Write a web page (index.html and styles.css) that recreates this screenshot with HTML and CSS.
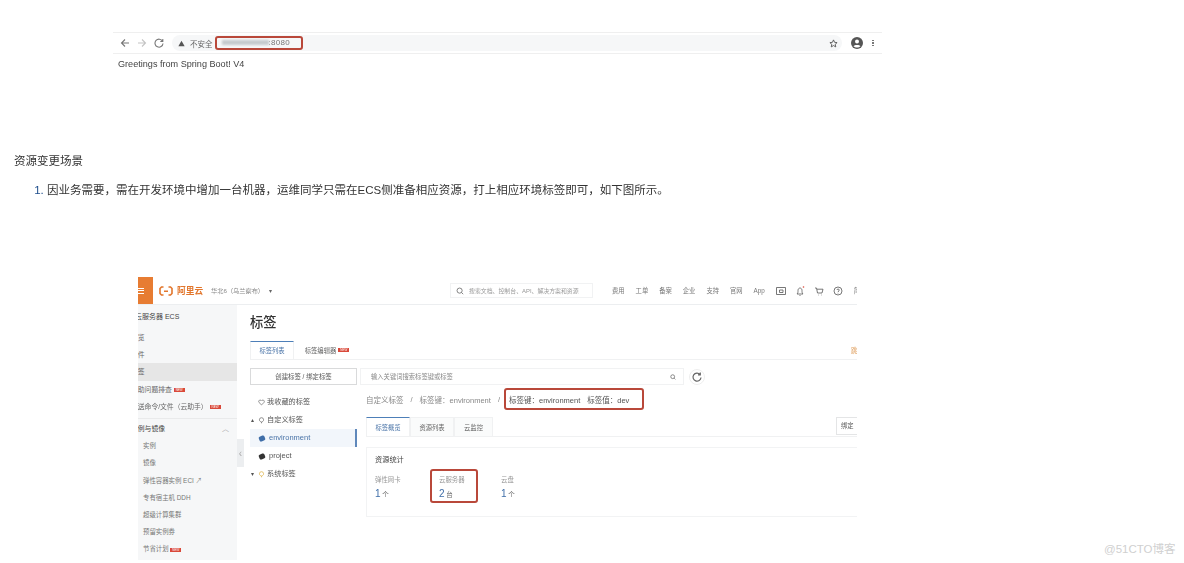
FILE: index.html
```html
<!DOCTYPE html>
<html lang="zh">
<head>
<meta charset="utf-8">
<title>资源变更场景</title>
<link rel="stylesheet" href="styles.css">
</head>
<body>
<main class="article">
  <figure class="shot-browser">
    <div class="toolbar">
      <svg class="tb-ico" viewBox="0 0 10 10"><path d="M9 5H1.5M5 1.5 1.5 5 5 8.500"/></svg>
      <svg class="tb-ico light" viewBox="0 0 10 10"><path d="M1 5h7.500M5 1.500 8.500 5 5 8.500"/></svg>
      <svg class="tb-ico" viewBox="0 0 10 10"><path d="M8.500 3.200A4 4 0 1 0 9 5.500M8.800 1v2.500H6.300"/></svg>
      <div class="omnibox">
        <svg class="warn" viewBox="0 0 10 10"><path d="M5 1 9.500 9H.5z"/></svg>
        <span class="insecure">不安全</span>
        <span class="url"><span class="url-blur"></span>:8080</span>
        <svg class="star" viewBox="0 0 10 10"><path d="m5 1 1.200 2.700 2.800.3-2.100 1.900.6 2.900L5 7.300 2.500 8.800l.6-2.900L1 4l2.800-.3z"/></svg>
      </div>
      <svg class="avatar" viewBox="0 0 12 12"><circle cx="6" cy="6" r="6"/><circle class="cut" cx="6" cy="4.500" r="2"/><path class="cut" d="M2.500 9.300C3.500 7.700 8.500 7.700 9.500 9.300 7.800 11 4.200 11 2.500 9.300z"/></svg>
      <span class="dots"><i></i><i></i><i></i></span>
    </div>
    <p class="greeting">Greetings from Spring Boot! V4</p>
  </figure>

  <h2 class="section-title">资源变更场景</h2>
  <ol class="steps">
    <li>因业务需要，需在开发环境中增加一台机器，运维同学只需在ECS侧准备相应资源，打上相应环境标签即可，如下图所示。</li>
  </ol>

  <figure class="shot-console">
    <div class="console">
      <header class="topbar">
        <span class="burger"><i></i><i></i><i></i></span>
        <span class="logo">
          <svg class="logo-mark" viewBox="0 0 14 10"><path d="M4.500 1H2.500L1 2.500v5L2.500 9h2M9.500 1h2L13 2.500v5L11.500 9h-2M5 5.200h4"/></svg>
          <b>阿里云</b>
        </span>
        <span class="region">华北6（乌兰察布）<i class="region-arrow">▾</i></span>
        <span class="searchbox">
          <svg class="search-ico" viewBox="0 0 10 10"><circle cx="4.500" cy="4.500" r="3.200"/><path d="m7 7 2 2"/></svg>
          搜索文档、控制台、API、解决方案和资源
        </span>
        <nav class="topnav">
          <span>费用</span><span>工单</span><span>备案</span><span>企业</span><span>支持</span><span>官网</span><span>App</span>
          <svg viewBox="0 0 10 10"><path d="M.5 1.500h9v7h-9zM3.500 6.500h3.500V4H3.500z"/></svg>
          <svg class="bell" viewBox="0 0 10 10"><path d="M2 8c1-1 1-2 1-3.500C3 3 4 2 5 2s2 1 2 2.500S7 7 8 8zM4.500 9.500h1"/><circle class="dot" cx="8.500" cy="1" r=".8"/></svg>
          <svg viewBox="0 0 10 10"><path d="M1 2h1.500l1 5H8l1-3.800H3M4 9h.5M7.500 9H8"/></svg>
          <svg viewBox="0 0 10 10"><circle cx="5" cy="5" r="4"/><path d="M3.800 4C4 2.800 6.300 2.800 6.300 4 6.300 5 5 5 5 6.200M5 7.200v.4"/></svg>
          <span>简</span>
        </nav>
      </header>
      <div class="workspace">
        <aside class="sidebar">
          <h3 class="side-title">云服务器 ECS</h3>
          <ul class="side-list">
            <li>概览</li>
            <li>事件</li>
            <li class="active">标签</li>
            <li>自助问题排查 <em class="new">NEW</em></li>
            <li class="rule">发送命令/文件（云助手） <em class="new">NEW</em></li>
            <li class="group">实例与镜像<span class="caret">︿</span></li>
            <li class="sub">实例</li>
            <li class="sub">镜像</li>
            <li class="sub">弹性容器实例 ECI ↗</li>
            <li class="sub">专有宿主机 DDH</li>
            <li class="sub">超级计算集群</li>
            <li class="sub">预留实例券</li>
            <li class="sub">节省计划 <em class="new">NEW</em></li>
          </ul>
          <span class="collapse">‹</span>
        </aside>
        <section class="content">
          <h1 class="page-title">标签</h1>
          <div class="tabs tabs-main">
            <span class="tab on">标签列表</span>
            <span class="tab plain">标签编辑器 <em class="new">NEW</em></span>
            <span class="tab-right">跳</span>
          </div>
          <div class="split">
            <div class="tree">
              <button class="create">创建标签 / 绑定标签</button>
              <ul class="tree-list">
                <li class="node fav"><svg class="node-ico" viewBox="0 0 10 10"><path d="M5 8.500 1.500 5C.2 3.300 1.500 1.500 3 1.500c1 0 1.600.6 2 1.200.4-.6 1-1.200 2-1.200 1.500 0 2.800 1.800 1.500 3.500z"/></svg>我收藏的标签</li>
                <li class="node"><span class="tw">▴</span><svg class="node-ico" viewBox="0 0 10 10"><path d="M5 1a3 3 0 0 1 3 3c0 1.700-1.300 2.700-3 3.200V9M5 1a3 3 0 0 0-3 3c0 1.500 1 2.500 3 3.200"/></svg>自定义标签</li>
                <li class="sel"><span class="tagdot"></span>environment</li>
                <li class="leaf"><span class="tagdot dark"></span>project</li>
                <li class="node"><span class="tw">▾</span><svg class="node-ico yellow" viewBox="0 0 10 10"><path d="M5 1a3 3 0 0 1 3 3c0 1.700-1.300 2.700-3 3.200V9M5 1a3 3 0 0 0-3 3c0 1.500 1 2.500 3 3.200"/></svg>系统标签</li>
              </ul>
            </div>
            <div class="detail">
              <div class="filter">
                <span class="filter-input">输入关键词搜索标签键或标签<svg class="search-ico small" viewBox="0 0 10 10"><circle cx="4.500" cy="4.500" r="3.200"/><path d="m7 7 2 2"/></svg></span>
                <svg class="refresh" viewBox="0 0 16 16"><circle class="ring" cx="8" cy="8" r="7.500"/><path d="M11 5.500A4 4 0 1 0 12 8.500M11.300 3.500v2.300H9"/></svg>
              </div>
              <div class="crumbs">
                <span>自定义标签</span><span>/</span><span>标签键：environment</span><span>/</span>
                <span class="mark crumb-mark"><span>标签键：environment</span><span>标签值：dev</span></span>
              </div>
              <div class="tabs tabs-sub">
                <span class="tab on">标签概览</span>
                <span class="tab">资源列表</span>
                <span class="tab narrow">云监控</span>
                <span class="bind">绑定</span>
              </div>
              <div class="card">
                <h4 class="card-title">资源统计</h4>
                <div class="stats">
                  <div class="stat"><span class="stat-label">弹性网卡</span><span class="stat-val"><b>1</b> 个</span></div>
                  <div class="stat mark"><span class="stat-label">云服务器</span><span class="stat-val"><b>2</b> 台</span></div>
                  <div class="stat"><span class="stat-label">云盘</span><span class="stat-val"><b>1</b> 个</span></div>
                </div>
              </div>
            </div>
          </div>
        </section>
      </div>
    </div>
  </figure>
</main>
<span class="watermark">@51CTO博客</span>
</body>
</html>
```

FILE: styles.css
```css
* { box-sizing: border-box; }
html, body { margin: 0; height: 563px; overflow: hidden; background: #fff; }
body { position: relative; font-family: "Liberation Sans", "Noto Sans CJK SC", sans-serif; color: #222; }
figure, h1, h2, h3, h4, p, ul, ol { margin: 0; padding: 0; }
ul { list-style: none; }
em, i { font-style: normal; }

.article { display: flex; flex-direction: column; padding-top: 32px; }

/* first screenshot */
.shot-browser { margin-left: 113px; width: 769px; filter: blur(.5px); }
.toolbar { height: 22px; display: flex; align-items: center; gap: 7px; padding: 0 6px 0 7px; border-top: 1px solid #efefef; border-bottom: 1px solid #efefef; }
.tb-ico { width: 10px; height: 10px; flex: none; fill: none; stroke: #777; stroke-width: 1.1; }
.tb-ico.light { stroke: #c4c4c4; }
.omnibox { flex: 1; height: 16px; margin-left: 1px; display: flex; align-items: center; gap: 3px; padding: 0 4px 0 6px; background: #f6f7f8; border-radius: 8px; font-size: 7.500px; color: #666; }
.warn { width: 7px; height: 7px; fill: #555; flex: none; }
.insecure { margin-left: 2px; }
.url { height: 14px; width: 88px; margin: -1px 0 0 -1px; display: flex; align-items: center; padding-left: 5px; border: 2px solid #b9483a; border-radius: 3px; font-size: 8px; letter-spacing: .3px; color: #777; }
.url-blur { width: 47px; height: 5px; background: #c5cacd; filter: blur(1px); }
.star { width: 9px; height: 9px; margin-left: auto; fill: none; stroke: #555; }
.avatar { width: 12px; height: 12px; margin-left: 2px; fill: #555; flex: none; }
.avatar .cut { fill: #fff; }
.dots { display: flex; flex-direction: column; gap: 1px; width: 6px; align-items: center; }
.dots i { width: 1.500px; height: 1.500px; background: #777; }
.greeting { margin: 4px 0 0 5px; font-size: 9.100px; line-height: 12px; color: #444; }

/* article text */
.section-title { margin: 83px 0 0 14px; font-size: 11.500px; line-height: 16px; font-weight: 400; color: #333; filter: blur(.2px); }
.steps { margin: 13px 0 0 47px; font-size: 11.500px; line-height: 16px; color: #333; filter: blur(.2px); }
.steps li::marker { color: #1e4e8c; }

/* second screenshot */
.shot-console { margin: 79px 0 0 138px; width: 719px; height: 283px; overflow: hidden; filter: blur(.55px); }
.console { width: 740px; margin-left: -15px; color: #555; }
.topbar { height: 28px; display: flex; align-items: center; border-bottom: 1px solid #eceef0; font-size: 6.300px; }
.burger { width: 30px; height: 27px; padding-left: 15px; display: flex; flex-direction: column; justify-content: center; gap: 1.500px; background: #e77c32; }
.burger i { width: 6px; height: 1px; background: #fff; }
.logo { margin-left: 6px; display: flex; align-items: center; gap: 4px; color: #e2762c; font-size: 8.700px; line-height: 12px; }
.logo-mark { width: 14px; height: 10px; fill: none; stroke: #e2762c; stroke-width: 1.600; }
.region { margin-left: 8px; color: #888; font-size: 6.200px; white-space: nowrap; }
.region-arrow { margin-left: 5px; color: #666; }
.searchbox { margin-left: 178px; width: 143px; height: 15px; display: flex; align-items: center; gap: 5px; padding-left: 5px; border: 1px solid #f1f2f3; color: #999; font-size: 5.900px; white-space: nowrap; overflow: hidden; }
.search-ico { width: 8px; height: 8px; flex: none; fill: none; stroke: #666; stroke-width: 1; }
.topnav { margin-left: 19px; display: flex; align-items: center; gap: 11px; color: #777; white-space: nowrap; }
.topnav svg { width: 10px; height: 10px; fill: none; stroke: #555; stroke-width: .8; }
.topnav svg + svg { margin-left: -2px; }
.topnav .dot { fill: #d9493a; stroke: none; }
.workspace { display: flex; height: 256px; }
.sidebar { position: relative; width: 114px; flex: none; background: #f6f7f8; padding-top: 4px; font-size: 6.800px; }
.side-title { padding-left: 12px; height: 20px; line-height: 16px; font-size: 7px; font-weight: 400; color: #444; }
.side-list li { height: 17.200px; line-height: 17.200px; padding-left: 8px; color: #666; white-space: nowrap; }
.side-list .active { background: #e6e6e6; }
.side-list .rule { position: relative; margin-bottom: 5px; }
.side-list .rule::after { content: ""; position: absolute; left: 0; right: 0; bottom: -4px; height: 1px; background: #e9eaeb; }
.side-list .group { display: flex; justify-content: space-between; padding-right: 8px; color: #444; }
.caret { color: #aaa; font-size: 7px; }
.side-list .sub { padding-left: 20px; font-size: 6.400px; color: #777; }
.new { display: inline-block; width: 11px; height: 4px; font-size: 3px; line-height: 4px; vertical-align: middle; text-align: center; color: #fff; background: #d9493a; }
.collapse { position: absolute; top: 134px; right: -7px; width: 7px; height: 28px; display: flex; align-items: center; justify-content: center; background: #eceef0; font-size: 10px; color: #aaa; }
.content { flex: 1; min-width: 0; padding: 6px 0 0 13px; }
.page-title { font-size: 13.300px; font-weight: 500; line-height: 24px; color: #333; }
.tabs { display: flex; align-items: stretch; border-bottom: 1px solid #f0f1f2; font-size: 6.300px; }
.tabs-main { height: 19px; margin-top: 6px; width: 607px; }
.tab { display: flex; align-items: center; justify-content: center; gap: 2px; width: 44px; background: #fafbfb; border: 1px solid #f0f1f2; border-bottom: 0; color: #666; white-space: nowrap; }
.tab.on { background: #fff; border-top: 1px solid #4d7fb8; color: #4a74a8; }
.tab.plain { width: 66px; background: #fff; border: 0; }
.tab.narrow { width: 39px; }
.tab-right { margin-left: auto; align-self: center; color: #e0a060; width: 6px; overflow: hidden; white-space: nowrap; }
.split { display: flex; gap: 3px; }
.tree { width: 107px; flex: none; padding-top: 8px; }
.create { display: block; width: 107px; height: 17px; padding: 0; background: #fff; border: 1px solid #d9dadb; font: 6.400px "Liberation Sans", "Noto Sans CJK SC", sans-serif; color: #555; }
.tree-list { margin-top: 8px; font-size: 7.200px; color: #555; }
.tree-list li { height: 18px; line-height: 18px; white-space: nowrap; }
.tree-list .node { display: flex; align-items: center; gap: 2px; padding-left: 1px; }
.tree-list .fav { padding-left: 8px; }
.node-ico { width: 7px; height: 7px; flex: none; fill: none; stroke: #666; stroke-width: 1; }
.node-ico.yellow { stroke: #dcb042; }
.tw { width: 5px; color: #555; font-size: 6px; }
.tree-list .sel { display: flex; align-items: center; gap: 4px; padding-left: 9px; background: #f2f6fb; border-right: 2px solid #5f88bb; color: #4a74a8; font-size: 7.500px; }
.tree-list .leaf { display: flex; align-items: center; gap: 4px; padding-left: 9px; font-size: 7.500px; }
.tagdot { width: 6px; height: 5px; border-radius: 1.500px; background: #3f6ea8; transform: rotate(-25deg); }
.tagdot.dark { background: #333; }
.detail { flex: 1; min-width: 0; padding-top: 8px; }
.filter { display: flex; align-items: center; gap: 5px; height: 17px; }
.filter-input { width: 324px; height: 17px; display: flex; align-items: center; justify-content: space-between; padding: 0 7px 0 10px; border: 1px solid #f1f2f3; color: #888; font-size: 6.300px; }
.search-ico.small { width: 6px; height: 6px; stroke: #444; }
.refresh { width: 16px; height: 16px; flex: none; fill: none; stroke: #666; stroke-width: 1.200; }
.refresh .ring { stroke: #eee; stroke-width: 1; }
.crumbs { display: flex; align-items: center; gap: 7px; height: 22px; margin-top: 3px; padding-left: 6px; font-size: 7.500px; color: #888; white-space: nowrap; }
.mark { border: 2px solid #b9483a; border-radius: 3px; }
.crumb-mark { height: 22px; width: 140px; display: flex; align-items: center; gap: 7px; padding-left: 3px; margin-left: -3px; color: #555; }
.tabs-sub { height: 20px; margin: 7px 0 0 6px; }
.bind { margin-left: auto; width: 27px; height: 18px; line-height: 16px; padding-left: 4px; border: 1px solid #e4e5e6; color: #555; }
.card { height: 70px; margin: 10px 0 0 6px; padding: 7px 0 0 8px; border: 1px solid #f2f3f4; }
.card-title { font-size: 7.200px; font-weight: 400; line-height: 10px; color: #444; }
.stats { display: flex; margin-top: 4px; }
.stat { height: 34px; display: flex; flex-direction: column; padding-top: 6px; gap: 4px; width: 55px; font-size: 6.400px; color: #999; }
.stat.mark { width: 48px; padding-left: 7px; margin-right: 23px; padding-top: 4px; }
.stat-val { font-size: 6.500px; color: #666; }
.stat-val b { font-size: 10px; font-weight: 400; color: #3f6ea8; }

.watermark { position: absolute; left: 1104px; top: 541px; font-size: 11.500px; line-height: 16px; color: #d0d0d0; }
```
